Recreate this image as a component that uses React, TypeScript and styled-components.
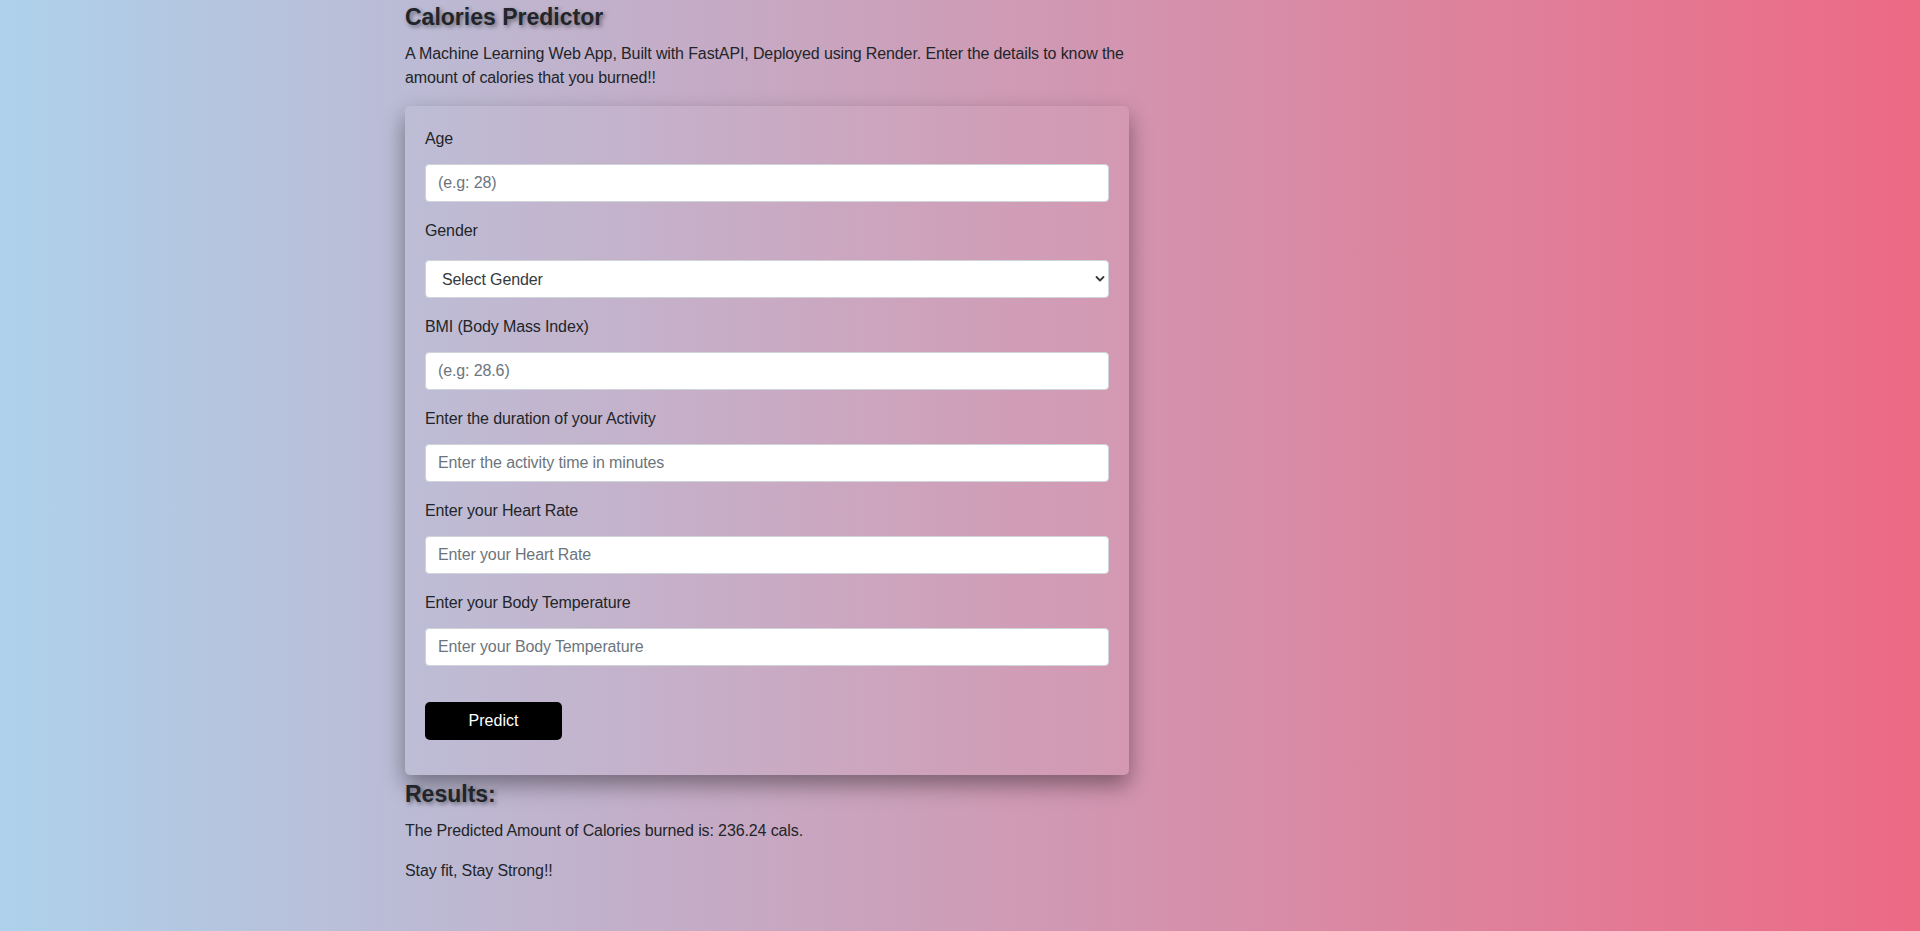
import React from "react";
import styled, { createGlobalStyle } from "styled-components";

const Global = createGlobalStyle`
  html, body { margin: 0; padding: 0; }
  body {
    font-family: "Liberation Sans", Arial, sans-serif;
    font-size: 16px;
    line-height: 1.5;
    letter-spacing: -0.12px;
    color: #212529;
  }
  * { box-sizing: border-box; }
`;

const Page = styled.div`
  min-height: 100vh;
  background: linear-gradient(to right, #aed1eb, #ed6984);
`;

const Container = styled.div`
  max-width: 1140px;
  margin: 0 auto;
  padding: 0 15px;
`;

const Column = styled.div`
  width: 724px;
`;

const Heading = styled.h3<{ $top?: number }>`
  margin: ${(p) => p.$top ?? 0}px 0 8px;
  font-size: 23px;
  line-height: 34px;
  font-weight: 700;
  letter-spacing: 0;
  color: #212529;
  text-shadow: 2px 2px 4px rgba(0, 0, 0, 0.45);
`;

const Text = styled.p`
  margin: 0 0 16px;
`;

const Card = styled.form`
  padding: 20px;
  border-radius: 5px;
  background: rgba(255, 255, 255, 0.04);
  box-shadow: 0 10px 22px rgba(0, 0, 0, 0.4);
  display: flex;
  flex-direction: column;
  gap: 16px;
`;

const Group = styled.div`
  display: flex;
  flex-direction: column;
`;

const Label = styled.label<{ $gap?: number }>`
  margin-top: 1px;
  margin-bottom: ${(p) => (p.$gap ?? 14) - 1}px;
  line-height: 24px;
`;

const Input = styled.input`
  height: 38px;
  padding: 6px 12px;
  font-family: inherit;
  font-size: 16px;
  letter-spacing: inherit;
  color: #495057;
  background: #fff;
  border: 1px solid #ced4da;
  border-radius: 4px;
  outline: none;
  &::placeholder { color: #6c757d; }
`;

const SelectWrap = styled.div`
  position: relative;
`;

const Select = styled.select`
  width: 100%;
  height: 38px;
  padding: 6px 30px 6px 16px;
  font-family: inherit;
  font-size: 16px;
  letter-spacing: inherit;
  color: #343a40;
  background: #fff;
  border: 1px solid #ced4da;
  border-radius: 4px;
  appearance: none;
  outline: none;
`;

const Chevron = styled.svg`
  position: absolute;
  right: 4px;
  top: 15px;
  pointer-events: none;
`;

const ButtonRow = styled.div`
  padding: 20px 0 15px;
`;

const Button = styled.button`
  width: 137px;
  height: 38px;
  border: none;
  border-radius: 5px;
  background: #000;
  color: #fff;
  font-family: inherit;
  font-size: 16px;
  cursor: pointer;
`;

const fields = [
  { label: "Age", placeholder: "(e.g: 28)" },
  { label: "Gender", select: true },
  { label: "BMI (Body Mass Index)", placeholder: "(e.g: 28.6)" },
  { label: "Enter the duration of your Activity", placeholder: "Enter the activity time in minutes" },
  { label: "Enter your Heart Rate", placeholder: "Enter your Heart Rate" },
  { label: "Enter your Body Temperature", placeholder: "Enter your Body Temperature" },
];

export default function App() {
  return (
    <Page>
      <Global />
      <Container>
        <Column>
          <Heading>Calories Predictor</Heading>
          <Text>
            A Machine Learning Web App, Built with FastAPI, Deployed using Render. Enter the details to know the
            amount of calories that you burned!!
          </Text>
          <Card onSubmit={(e) => e.preventDefault()}>
            {fields.map((f) => (
              <Group key={f.label}>
                <Label $gap={f.select ? 18 : 14}>{f.label}</Label>
                {f.select ? (
                  <SelectWrap>
                    <Select defaultValue="">
                      <option value="">Select Gender</option>
                      <option value="male">Male</option>
                      <option value="female">Female</option>
                    </Select>
                    <Chevron width="10" height="8" viewBox="0 0 10 8">
                      <path d="M1.5 2 L5 5.5 L8.5 2" fill="none" stroke="#3a3a3a" strokeWidth="1.8" strokeLinecap="round" strokeLinejoin="round" />
                    </Chevron>
                  </SelectWrap>
                ) : (
                  <Input type="text" placeholder={f.placeholder} />
                )}
              </Group>
            ))}
            <ButtonRow>
              <Button type="submit">Predict</Button>
            </ButtonRow>
          </Card>
          <Heading $top={2}>Results:</Heading>
          <Text>The Predicted Amount of Calories burned is: 236.24 cals.</Text>
          <Text>Stay fit, Stay Strong!!</Text>
        </Column>
      </Container>
    </Page>
  );
}
